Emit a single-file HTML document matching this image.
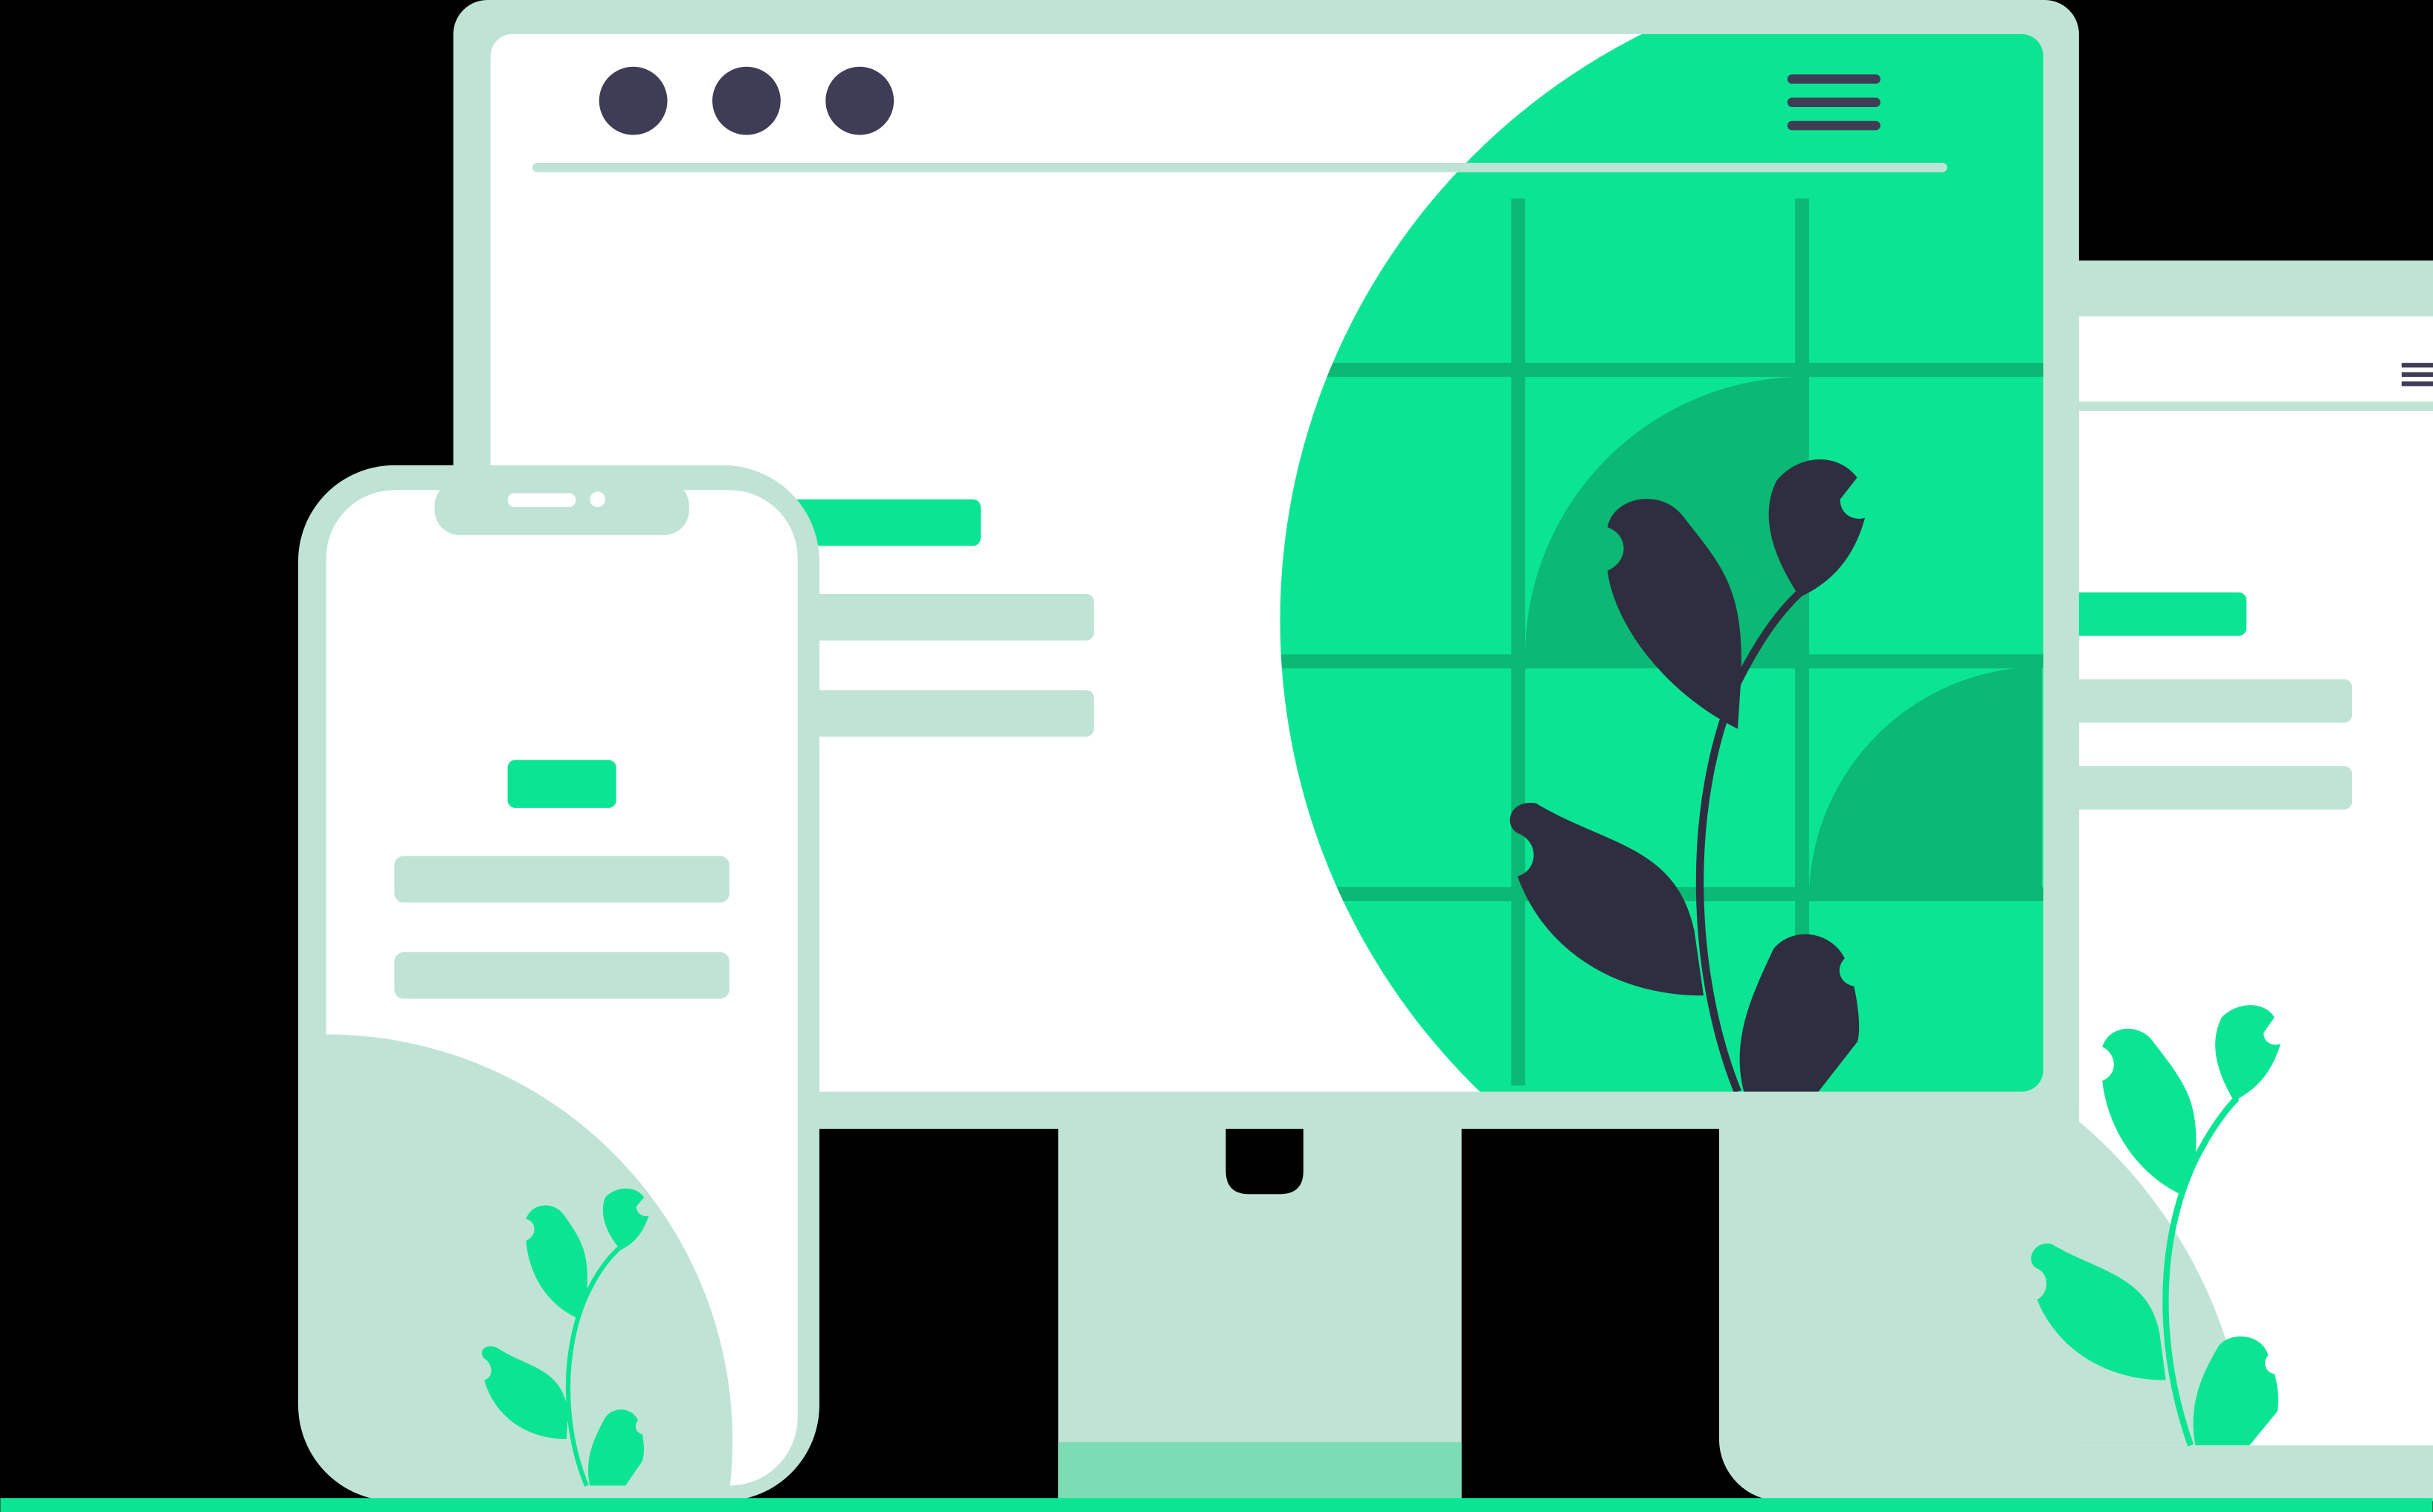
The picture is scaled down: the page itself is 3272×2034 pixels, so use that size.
<!DOCTYPE html>
<html><head><meta charset="utf-8"><style>
html,body{margin:0;padding:0;background:#000;width:3272px;height:2034px;overflow:hidden}
svg{display:block}
</style></head><body>
<svg width="3272" height="2034" viewBox="0 0 1568 975" xmlns="http://www.w3.org/2000/svg">
<defs>
<clipPath id="scr"><rect x="316" y="22" width="1001" height="682" rx="14"/></clipPath>
<clipPath id="circ"><circle cx="1248" cy="400" r="423"/></clipPath>
<clipPath id="ph"><rect x="210" y="316" width="304" height="642" rx="44"/></clipPath>
<clipPath id="tb"><rect x="1110" y="204" width="460" height="728"/></clipPath>
</defs>
<rect width="1568" height="975" fill="#000"/>
<rect x="1108" y="168" width="520" height="800" rx="40" fill="#bfe3d5"/>
<rect x="1340" y="204" width="240" height="728" fill="#fff"/>
<g clip-path="url(#tb)"><circle cx="1140" cy="960" r="310" fill="#bfe3d5"/></g>
<rect x="1340" y="259" width="240" height="6" fill="#bfe3d5"/>
<rect x="1548" y="234" width="22" height="3" fill="#3f3d56"/><rect x="1548" y="240" width="22" height="3" fill="#3f3d56"/><rect x="1548" y="246" width="22" height="3" fill="#3f3d56"/>
<rect x="1330" y="382" width="118" height="28" rx="5" fill="#0be593"/>
<rect x="1330" y="438" width="186" height="28" rx="5" fill="#bfe3d5"/>
<rect x="1330" y="494" width="186" height="28" rx="5" fill="#bfe3d5"/>
<rect x="682" y="700" width="260" height="270" fill="#bfe3d5"/>
<rect x="682" y="930" width="260" height="40" fill="#7bdcb5"/>
<rect x="292" y="0" width="1048" height="728" rx="22" fill="#bfe3d5"/>
<rect x="316" y="22" width="1001" height="682" rx="14" fill="#fff"/>
<path d="M790 728 H840 V755 Q840 770 825 770 H805 Q790 770 790 755 Z" fill="#000"/>
<g clip-path="url(#scr)">
<circle cx="1248" cy="400" r="423" fill="#0be593"/>
<g clip-path="url(#circ)">
<path d="M983 426 A180 180 0 0 1 1163 243 L1163 426 Z" fill="#0bb874"/>
<path d="M1166 576 A150 150 0 0 1 1316 430 L1316 576 Z" fill="#0bb874"/>
<rect x="974" y="128" width="9" height="572" fill="#0bb874"/>
<rect x="1157" y="128" width="9" height="572" fill="#0bb874"/>
<rect x="820" y="234" width="500" height="9" fill="#0bb874"/>
<rect x="820" y="422" width="500" height="9" fill="#0bb874"/>
<rect x="820" y="572" width="500" height="9" fill="#0bb874"/>
</g>
<g fill="#2f2e41">
<path d="M1120 704 C1090 630 1085 520 1120 440 C1135 410 1150 390 1165 378" stroke="#2f2e41" stroke-width="5" fill="none"/>
<path d="M1120 470 C1070 445 1040 400 1036 368 C1050 362 1050 345 1036 340 C1040 320 1070 315 1084 332 C1110 365 1125 380 1122 440 Z"/>
<path d="M1160 385 C1140 355 1135 330 1145 310 C1160 292 1185 292 1197 308 L1186 322 C1186 332 1195 336 1202 334 C1195 360 1180 376 1160 385 Z"/>
<path d="M1098 642 C1040 642 995 612 978 565 C990 562 993 545 980 538 C968 534 972 515 990 518 C1035 545 1080 545 1092 600 Z"/>
<path d="M1124 704 C1115 670 1130 640 1143 612 C1155 597 1180 600 1189 618 C1183 624 1185 634 1195 636 C1200 660 1198 670 1197 672 L1172 704 Z"/>
</g>
</g>
<circle cx="408" cy="65" r="22" fill="#3f3d56"/><circle cx="481" cy="65" r="22" fill="#3f3d56"/><circle cx="554" cy="65" r="22" fill="#3f3d56"/>
<rect x="1152" y="48" width="60" height="6" rx="3" fill="#3f3d56"/><rect x="1152" y="63" width="60" height="6" rx="3" fill="#3f3d56"/><rect x="1152" y="78" width="60" height="6" rx="3" fill="#3f3d56"/>
<rect x="343" y="105" width="912" height="6" rx="3" fill="#bfe3d5"/>
<rect x="500" y="322" width="132" height="30" rx="5" fill="#0be593"/>
<rect x="500" y="383" width="205" height="30" rx="5" fill="#bfe3d5"/>
<rect x="500" y="445" width="205" height="30" rx="5" fill="#bfe3d5"/>
<rect x="192" y="300" width="336" height="668" rx="62" fill="#bfe3d5"/>
<rect x="210" y="316" width="304" height="642" rx="44" fill="#fff"/>
<rect x="280" y="310" width="164" height="35" rx="16" fill="#bfe3d5"/>
<rect x="327" y="318" width="44" height="9" rx="4.5" fill="#fff"/><circle cx="385" cy="322" r="5" fill="#fff"/>
<g clip-path="url(#ph)"><circle cx="210" cy="929" r="262" fill="#bfe3d5"/></g>
<rect x="327" y="490" width="70" height="31" rx="5" fill="#0be593"/>
<rect x="254" y="552" width="216" height="30" rx="6" fill="#bfe3d5"/>
<rect x="254" y="614" width="216" height="30" rx="6" fill="#bfe3d5"/>
<g fill="#0be593">
<path d="M378 958 C362 920 362 870 378 835 C385 820 393 810 400 804" stroke="#0be593" stroke-width="3" fill="none"/>
<path d="M372 850 C350 840 340 818 339 800 C346 797 346 788 339 786 C342 776 356 774 363 783 C375 800 380 808 378 835 Z"/>
<path d="M400 806 C390 795 386 782 390 772 C398 764 410 765 415 772 L410 778 C410 783 415 785 418 784 C414 796 408 802 400 806 Z"/>
<path d="M365 928 C338 928 318 912 312 890 C318 888 318 880 312 876 C308 872 312 866 320 869 C340 882 362 882 366 910 Z"/>
<path d="M380 958 C376 940 384 925 390 914 C396 906 408 908 411 916 C408 920 410 924 414 925 C416 938 414 940 414 942 L403 958 Z"/>
</g>
<g fill="#0be593">
<path d="M1412 932 C1390 870 1390 800 1415 748 C1425 728 1435 715 1442 708" stroke="#0be593" stroke-width="4" fill="none"/>
<path d="M1405 770 C1375 755 1358 725 1355 697 C1365 693 1365 680 1355 675 C1360 660 1380 660 1388 672 C1408 698 1418 710 1415 748 Z"/>
<path d="M1440 710 C1428 690 1424 672 1432 656 C1443 645 1460 646 1466 656 L1459 666 C1459 673 1466 675 1470 673 C1464 692 1455 702 1440 710 Z"/>
<path d="M1396 890 C1355 890 1325 868 1313 838 C1320 835 1322 822 1313 818 C1305 814 1310 800 1322 802 C1352 820 1385 822 1392 860 Z"/>
<path d="M1415 932 C1410 905 1420 885 1430 868 C1438 858 1458 860 1462 874 C1458 878 1460 885 1466 886 C1470 900 1468 908 1468 910 L1450 932 Z"/>
</g>
<rect x="0" y="966" width="1568" height="9" fill="#0be593"/>
</svg>
</body></html>
